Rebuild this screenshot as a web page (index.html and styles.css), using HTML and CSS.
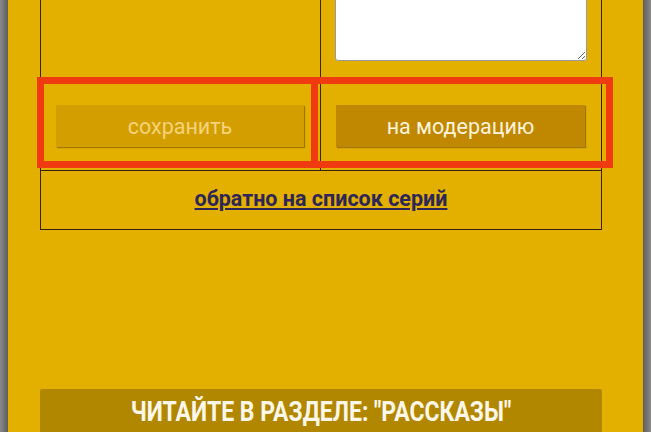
FILE: index.html
```html
<!DOCTYPE html>
<html lang="ru">
<head>
    <meta charset="UTF-8">
    <meta name="viewport" content="width=device-width, initial-scale=1.0">
    <title>Редактирование серии</title>
    <link rel="stylesheet" href="styles.css">
</head>
<body>
    <div class="page">
        <div class="edit-grid">
            <div class="cell cell-top"></div>
            <div class="cell cell-top cell-text">
                <textarea class="descr"></textarea>
            </div>
            <div class="cell cell-btn">
                <button class="btn btn-save" disabled>сохранить</button>
            </div>
            <div class="cell cell-btn">
                <button class="btn btn-moder">на модерацию</button>
            </div>
            <div class="cell cell-link">
                <a href="#" class="back-link">обратно на список серий</a>
            </div>
        </div>

        <div class="read-bar">
            <span class="read-bar-text">ЧИТАЙТЕ В РАЗДЕЛЕ: "РАССКАЗЫ"</span>
        </div>

        <!-- пометки поверх скриншота -->
        <div class="mark mark-left"></div>
        <div class="mark mark-right"></div>
    </div>
</body>
</html>
```

FILE: styles.css
```css
html, body {
    margin: 0;
    height: 100%;
    overflow: hidden;
}

body {
    background: linear-gradient(to right, #8a8a8a, #5e5e5e 8px, #5e5e5e calc(100% - 8px), #8a8a8a);
    font-family: Roboto, "Liberation Sans", sans-serif;
}

.page {
    position: relative;
    margin: 0 8px;
    height: 100%;
    background-color: #e3b000;
    overflow: hidden;
}

.edit-grid {
    display: grid;
    grid-template-columns: 279px 280px;
    grid-template-rows: 142px 86px 58px;
    gap: 1px;
    padding: 1px;
    width: 560px;
    margin: -60px 0 0 32px;
    background-color: #3a2208;
}

.cell {
    background-color: #e3b000;
    box-sizing: border-box;
}

.cell-text {
    display: flex;
    align-items: flex-end;
    padding: 0 14px 22px 14px;
}

.descr {
    display: block;
    box-sizing: border-box;
    width: 100%;
    height: 100px;
    margin: 0;
    border: 1px solid #9a9a9a;
    border-radius: 3px;
    background: #fff;
    resize: vertical;
}

.cell-btn {
    padding: 21px 16px 0 15px;
}

.btn {
    display: block;
    width: 100%;
    height: 42px;
    border: none;
    font-family: Roboto, "Liberation Sans", sans-serif;
    font-size: 21.5px;
    cursor: pointer;
    box-shadow: 1px 1px 1px rgba(80, 50, 0, 0.45);
}

.btn-save {
    background-color: #d29e00;
    color: #f6d27a;
}

.btn-moder {
    background-color: #c08700;
    color: #fff4dc;
}

.cell-link {
    grid-column: 1 / 3;
    display: flex;
    align-items: center;
    justify-content: center;
    padding-bottom: 3px;
}

.back-link {
    color: #2d2657;
    font-size: 21.5px;
    font-weight: bold;
    text-decoration: underline;
}

.read-bar {
    width: 562px;
    margin: 159px 0 0 32px;
    height: 60px;
    background-color: #b18700;
    border-radius: 2px;
    text-align: center;
    white-space: nowrap;
}

.read-bar-text {
    display: inline-block;
    color: #fff8ea;
    font-size: 28px;
    font-weight: bold;
    line-height: 46px;
    transform: scaleX(0.82);
}

.mark {
    position: absolute;
    border: 7px solid #f03a10;
    box-sizing: border-box;
}

.mark-left {
    left: 29px;
    top: 77px;
    width: 281px;
    height: 91px;
}

.mark-right {
    left: 303px;
    top: 77px;
    width: 302px;
    height: 91px;
}
```
